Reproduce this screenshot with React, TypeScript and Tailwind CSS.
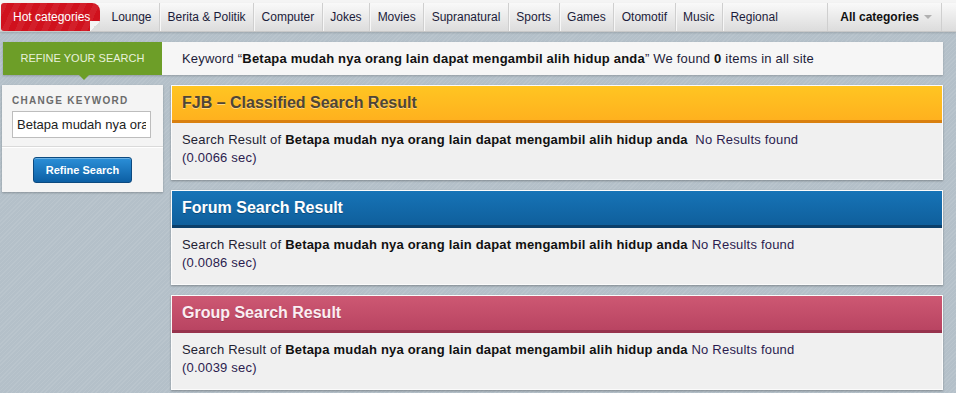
import React from 'react';

const navItems = ['Lounge', 'Berita & Politik', 'Computer', 'Jokes', 'Movies', 'Supranatural', 'Sports', 'Games', 'Otomotif', 'Music', 'Regional'];

const keyword = 'Betapa mudah nya orang lain dapat mengambil alih hidup anda';

type Panel = {
  title: string;
  time: string;
  header: string;
  titleCls: string;
  gap?: boolean;
};

const panels: Panel[] = [
  {
    title: 'FJB – Classified Search Result',
    time: '(0.0066 sec)',
    header: 'bg-[linear-gradient(#ffc522,#ffb11e)] border-[#d9800f]',
    titleCls: 'text-[#4f4536] [text-shadow:0_1px_0_rgba(255,255,255,0.45)]',
    gap: true,
  },
  {
    title: 'Forum Search Result',
    time: '(0.0086 sec)',
    header: 'bg-[linear-gradient(#1774b7,#0f5f9c)] border-[#0b3f6a]',
    titleCls: 'text-white [text-shadow:0_1px_0_rgba(0,0,0,0.3)]',
  },
  {
    title: 'Group Search Result',
    time: '(0.0039 sec)',
    header: 'bg-[linear-gradient(#cd5873,#b94462)] border-[#97334d]',
    titleCls: 'text-[#fbeef2] [text-shadow:0_1px_0_rgba(0,0,0,0.2)]',
  },
];

const ResultPanel: React.FC<Panel> = ({ title, time, header, titleCls, gap }) => (
  <div className="border border-[#fbfbfb] bg-[#f0f0f0] shadow-[0_1px_2px_rgba(0,0,0,0.3)]">
    <div className={`h-[37px] border-b-[3px] px-[10px] flex items-center ${header}`}>
      <span className={`text-[16px] font-bold ${titleCls}`}>{title}</span>
    </div>
    <div className="px-[10px] pt-[8px] h-[56px] text-[13px] leading-[18px] tracking-[0.2px] text-[#222233]">
      <div>
        Search Result of <b className="text-[#111]">{keyword}</b>
        {gap ? '\u00a0 ' : ' '}
        <span className="text-[#2b1c4f]">No Results found</span>
      </div>
      <div className="text-[#2b1c4f]">{time}</div>
    </div>
  </div>
);

export default function App() {
  return (
    <div className="w-[956px] h-[393px] overflow-hidden font-['Liberation_Sans',Arial,sans-serif] bg-[#b4c0c9] bg-[repeating-linear-gradient(135deg,rgba(255,255,255,0.08)_0px,rgba(255,255,255,0.08)_1px,transparent_1px,transparent_3px)]">
      {/* top nav */}
      <div className="h-[3px] bg-[#f4f4f4]" />
      <div className="h-[29px] flex items-stretch bg-[linear-gradient(#f9f9f9,#dcdcdc)] border-b border-[#c8c8c8] shadow-[0_1px_2px_rgba(0,0,0,0.15)]">
        <div className="relative ml-[1px] w-[99px] rounded-tr-[8px] rounded-tl-[3px] rounded-bl-[3px] bg-[#d0111d] bg-[repeating-linear-gradient(115deg,rgba(255,255,255,0.06)_0px,rgba(255,255,255,0.06)_6px,transparent_6px,transparent_12px)] flex items-center pl-[12px] text-[12px] text-white">
          Hot categories
          <span className="absolute right-0 bottom-0 w-[10px] h-[10px] bg-[linear-gradient(135deg,#f4f4f4_50%,#dcdcdc_50%)]" />
        </div>
        <div className="flex items-stretch pl-[4px]">
          {navItems.map((item) => (
            <div
              key={item}
              className="px-[7.5px] flex items-center text-[12px] text-[#1c1c3a] border-r border-[#cfcfcf] shadow-[1px_0_0_#f7f7f7] last:border-r-0 last:shadow-none"
            >
              {item}
            </div>
          ))}
        </div>
        <div className="ml-[42px] w-[115px] border-l border-r border-[#cfcfcf] flex items-center pl-[12px] gap-[5px] text-[12px] font-bold text-[#111]">
          All categories
          <span className="w-0 h-0 border-l-[4px] border-r-[4px] border-t-[4px] border-l-transparent border-r-transparent border-t-[#b0b0b0]" />
        </div>
      </div>

      {/* refine row */}
      <div className="mt-[10px] ml-[3px] w-[940px] h-[33px] flex shadow-[0_1px_2px_rgba(0,0,0,0.2)]">
        <div className="relative w-[159px] bg-[#6d9e28] flex items-center justify-center text-[11px] text-[#e9f1dc]">
          REFINE YOUR SEARCH
          <span className="absolute left-[76px] -bottom-[5px] w-0 h-0 border-l-[5px] border-r-[5px] border-t-[5px] border-l-transparent border-r-transparent border-t-[#6d9e28]" />
        </div>
        <div className="flex-1 bg-[#f6f6f6] flex items-center pl-[20px] text-[13px] tracking-[0.2px] text-[#1c1c3a]">
          Keyword “<b className="text-[#111]">{keyword}</b>” We found&nbsp;<b className="text-[#111]">0</b>&nbsp;items in all site
        </div>
      </div>

      {/* content */}
      <div className="mt-[10px] flex items-start">
        <div className="ml-[2px] w-[161px] h-[107px] bg-[#f4f4f4] shadow-[0_1px_2px_rgba(0,0,0,0.25)]">
          <div className="px-[10px] pt-[10px] pb-[8px] border-b border-[#dadada]">
            <div className="text-[10px] font-bold tracking-[1.3px] text-[#6b6b6b] leading-[12px]">CHANGE KEYWORD</div>
            <input
              readOnly
              value={keyword}
              className="mt-[4px] w-[139px] h-[27px] border border-[#bdbdbd] bg-white px-[4px] text-[13px] text-[#222] outline-none font-['Liberation_Sans',Arial,sans-serif]"
            />
          </div>
          <div className="border-t border-white pt-[9px] flex justify-center">
            <button className="w-[99px] h-[26px] rounded-[3px] border border-[#0c4a80] bg-[linear-gradient(#2b8fd8,#0c5fa4)] text-white text-[11px] font-bold shadow-[inset_0_1px_0_rgba(255,255,255,0.3)]">
              Refine Search
            </button>
          </div>
        </div>
        <div className="ml-[8px] w-[772px] flex flex-col gap-[10px]">
          {panels.map((p) => (
            <ResultPanel key={p.title} {...p} />
          ))}
        </div>
      </div>
    </div>
  );
}
